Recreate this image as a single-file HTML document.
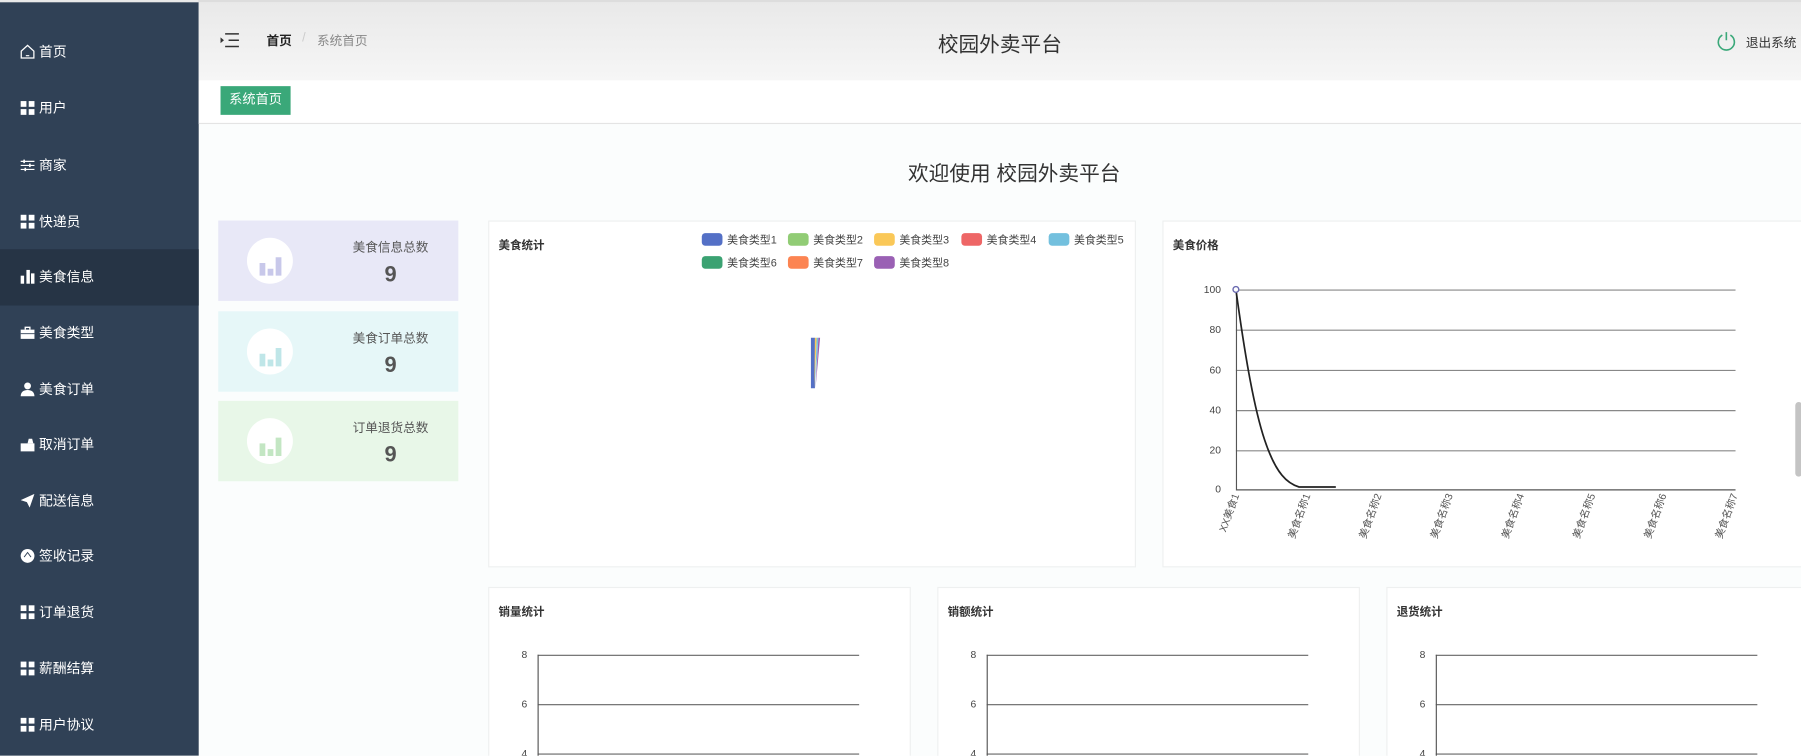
<!DOCTYPE html>
<html><head><meta charset="utf-8"><style>
*{margin:0;padding:0;box-sizing:border-box}
html,body{width:1801px;height:756px;overflow:hidden;background:#fbfdfd}
#w{position:absolute;left:0;top:0;width:1568px;height:658px;transform:scale(1.1486);transform-origin:0 0;font-family:"Liberation Sans","Noto Sans CJK SC",sans-serif;background:#fbfdfd;overflow:hidden}
.a{position:absolute}
#side{left:0;top:0;width:173px;height:658px;background:#304156;border-top:2px solid #e9e9e9}
.it{position:absolute;left:0;width:173px;height:49px;color:#fff;font-size:12px;line-height:49px;padding-left:34px}
.it i{position:absolute;left:18px;top:18px;width:12px;height:12px}
.it svg{position:absolute;left:17px;top:17px}
.g i{background:linear-gradient(#fff,#fff) 0 0/5px 5px no-repeat,linear-gradient(#fff,#fff) 7px 0/5px 5px no-repeat,linear-gradient(#fff,#fff) 0 7px/5px 5px no-repeat,linear-gradient(#fff,#fff) 7px 7px/5px 5px no-repeat}
#hd{left:173px;top:0;width:1395px;height:70px;background:linear-gradient(#e9e9e9,#f6f6f6);border-top:2px solid #ddd}
.card{position:absolute;left:190px;width:209px;height:70px}
.card .c{position:absolute;left:25px;top:15px;width:40px;height:40px;border-radius:50%;background:#fff}
.card .t{position:absolute;left:100px;width:100px;text-align:center;top:15px;font-size:11px;color:#555}
.card .n{position:absolute;left:100px;width:100px;text-align:center;top:37px;font-size:19px;font-weight:bold;color:#555}
.p{position:absolute;background:#fff;border:1px solid #eef0f0}
.pt{position:absolute;left:8px;top:12px;font-size:10px;font-weight:bold;color:#333}
.lg{position:absolute;font-size:9.5px;color:#444;white-space:nowrap}
.lg b{display:inline-block;width:18px;height:11px;border-radius:3px;vertical-align:-2px;margin-right:4px}
svg text{font-family:"Liberation Sans","Noto Sans CJK SC",sans-serif}
</style></head><body><div id="w">
<div id="side" class="a">
<div class="it" style="top:19px"><svg width="14" height="14"><path d="M1.5 6.5L7 1.5l5.5 5v6h-11z" fill="none" stroke="#fff" stroke-width="1.1"/><path d="M5.5 10.5h3" stroke="#fff" stroke-width="1"/></svg>首页</div>
<div class="it g" style="top:68px"><i></i>用户</div>
<div class="it" style="top:118px"><svg width="14" height="14"><path d="M1 3.5h12M1 7h12M1 10.5h12" stroke="#fff" stroke-width="1"/><path d="M4 2v3M9 5.5v3M5 9v3" stroke="#fff" stroke-width="1.4"/></svg>商家</div>
<div class="it g" style="top:167px"><i></i>快递员</div>
<div class="it" style="top:215px;background:#263445"><i style="background:linear-gradient(#fff,#fff) 0 5px/3px 7px no-repeat,linear-gradient(#fff,#fff) 4.5px 0/3px 12px no-repeat,linear-gradient(#fff,#fff) 9px 3px/3px 9px no-repeat"></i>美食信息</div>
<div class="it" style="top:264px"><svg width="14" height="14"><path d="M1 4h12v8H1z" fill="#fff"/><path d="M5 4V2h4v2" fill="none" stroke="#fff" stroke-width="1.2"/><path d="M1 7.5h12" stroke="#304156" stroke-width=".8"/></svg>美食类型</div>
<div class="it" style="top:313px"><svg width="14" height="14"><circle cx="7" cy="4" r="3" fill="#fff"/><path d="M1 13c0-4 3-5.5 6-5.5s6 1.5 6 5.5z" fill="#fff"/></svg>美食订单</div>
<div class="it" style="top:361px"><svg width="14" height="14"><path d="M1 6h12v7H1z" fill="#fff"/><path d="M8 2h3l1 4H7z" fill="#fff"/></svg>取消订单</div>
<div class="it" style="top:410px"><i style="background:#fff;clip-path:polygon(0 45%,100% 0,65% 100%,45% 60%)"></i>配送信息</div>
<div class="it" style="top:458px"><svg width="14" height="14"><circle cx="7" cy="7" r="6" fill="#fff"/><path d="M4 8l3-4 3 4" fill="none" stroke="#304156" stroke-width=".8"/></svg>签收记录</div>
<div class="it g" style="top:507px"><i></i>订单退货</div>
<div class="it g" style="top:556px"><i></i>薪酬结算</div>
<div class="it g" style="top:605px"><i></i>用户协议</div>
</div>
<div id="hd" class="a">
<svg class="a" style="left:18px;top:26px" width="18" height="14"><path d="M5 1.5h12M8 7h9M5 12.5h12" stroke="#333" stroke-width="1.3"/><path d="M1 4.5l3 2.5-3 2.5z" fill="#333"/></svg>
<div class="a" style="left:59px;top:25px;font-size:11px;font-weight:bold;color:#222">首页</div>
<div class="a" style="left:90px;top:25px;font-size:11px;color:#ccc">/</div>
<div class="a" style="left:103px;top:25px;font-size:11px;color:#888">系统首页</div>
<div class="a" style="left:600px;width:195px;text-align:center;top:23px;font-size:18px;color:#333">校园外卖平台</div>
<svg class="a" style="left:1321px;top:25px" width="18" height="18"><path d="M5.5 3.5A7 7 0 1 0 12.5 3.5" fill="none" stroke="#3aa879" stroke-width="1.4"/><path d="M9 1v7" stroke="#3aa879" stroke-width="1.4"/></svg>
<div class="a" style="left:1347px;top:27px;font-size:11px;color:#333">退出系统</div>
</div>
<div class="a" style="left:173px;top:70px;width:1395px;height:38px;background:#fff;border-bottom:1px solid #e4e4e4"></div>
<div class="a" style="left:192px;top:75px;width:61px;height:25px;background:#3aa879;color:#fff;font-size:11.5px;line-height:25px;text-align:center">系统首页</div>
<div class="a" style="left:700px;width:366px;text-align:center;top:137px;font-size:18px;color:#333">欢迎使用 校园外卖平台</div>

<div class="card" style="top:192px;background:#e8e8f7"><div class="c"><svg width="40" height="40"><path d="M11 22h5v11h-5zM18 27h5v6h-5zM25 17h5v16h-5z" fill="#c8c8ea"/></svg></div><div class="t">美食信息总数</div><div class="n">9</div></div>
<div class="card" style="top:271px;background:#e6f7f8"><div class="c"><svg width="40" height="40"><path d="M11 22h5v11h-5zM18 27h5v6h-5zM25 17h5v16h-5z" fill="#bfe6e8"/></svg></div><div class="t">美食订单总数</div><div class="n">9</div></div>
<div class="card" style="top:349px;background:#e8f7e8"><div class="c"><svg width="40" height="40"><path d="M11 22h5v11h-5zM18 27h5v6h-5zM25 17h5v16h-5z" fill="#c3e6c3"/></svg></div><div class="t">订单退货总数</div><div class="n">9</div></div>

<div class="p" style="left:425px;top:192px;width:564px;height:302px">
<div class="pt">美食统计</div>
<div class="lg" style="left:185px;top:8px"><b style="background:#5470c6"></b>美食类型1</div>
<div class="lg" style="left:260px;top:8px"><b style="background:#91cc75"></b>美食类型2</div>
<div class="lg" style="left:335px;top:8px"><b style="background:#fac858"></b>美食类型3</div>
<div class="lg" style="left:411px;top:8px"><b style="background:#ee6666"></b>美食类型4</div>
<div class="lg" style="left:487px;top:8px"><b style="background:#73c0de"></b>美食类型5</div>
<div class="lg" style="left:185px;top:28px"><b style="background:#3ba272"></b>美食类型6</div>
<div class="lg" style="left:260px;top:28px"><b style="background:#fc8452"></b>美食类型7</div>
<div class="lg" style="left:335px;top:28px"><b style="background:#9a60b4"></b>美食类型8</div>
<svg class="a" style="left:276px;top:100px" width="14" height="46"><path d="M4 1h2v44H4zM6 1h1.5v44H6z" fill="#5470c6"/><path d="M7.5 1h1.5L7 45z" fill="#fac858"/><path d="M9 1h1.5L7.5 45z" fill="#73c0de"/><path d="M10.5 1h1.5L8 45z" fill="#9a60b4"/></svg>
</div>

<div class="p" style="left:1012px;top:192px;width:560px;height:302px">
<div class="pt">美食价格</div>
<svg class="a" style="left:0;top:0" width="560" height="302">
<g stroke="#888" stroke-width="1"><path d="M63 59.5h435M63 94.5h435M63 129.5h435M63 164.5h435M63 199.5h435"/></g>
<path d="M63.5 59v174M63 233.5h435" stroke="#555" stroke-width="1"/>
<g font-size="9" fill="#444" text-anchor="end"><text x="50" y="62">100</text><text x="50" y="97">80</text><text x="50" y="132">60</text><text x="50" y="167">40</text><text x="50" y="202">20</text><text x="50" y="236">0</text></g>
<path d="M63 59C70 110 78 160 88 190S108 228 118 231L150 231" fill="none" stroke="#222" stroke-width="1.5"/>
<circle cx="63" cy="59" r="2.5" fill="#fff" stroke="#6a6ab0" stroke-width="1.2"/>
<g font-size="9" fill="#555" text-anchor="end">
<text transform="translate(66,238) rotate(-70)">XX美食1</text>
<text transform="translate(128,238) rotate(-70)">美食名称1</text>
<text transform="translate(190,238) rotate(-70)">美食名称2</text>
<text transform="translate(252,238) rotate(-70)">美食名称3</text>
<text transform="translate(314,238) rotate(-70)">美食名称4</text>
<text transform="translate(376,238) rotate(-70)">美食名称5</text>
<text transform="translate(438,238) rotate(-70)">美食名称6</text>
<text transform="translate(500,238) rotate(-70)">美食名称7</text>
</g></svg>
</div>

<div class="p" style="left:425px;top:511px;width:368px;height:160px"><div class="pt">销量统计</div>
<svg class="a" width="368" height="160"><path d="M42 58.5h280M42 101.5h280M42 144.5h280" stroke="#666"/><path d="M42.5 58v100" stroke="#555"/><g font-size="9" fill="#444" text-anchor="end"><text x="33" y="61">8</text><text x="33" y="104">6</text><text x="33" y="147">4</text></g></svg></div>
<div class="p" style="left:816px;top:511px;width:368px;height:160px"><div class="pt">销额统计</div>
<svg class="a" width="368" height="160"><path d="M42 58.5h280M42 101.5h280M42 144.5h280" stroke="#666"/><path d="M42.5 58v100" stroke="#555"/><g font-size="9" fill="#444" text-anchor="end"><text x="33" y="61">8</text><text x="33" y="104">6</text><text x="33" y="147">4</text></g></svg></div>
<div class="p" style="left:1207px;top:511px;width:368px;height:160px"><div class="pt">退货统计</div>
<svg class="a" width="368" height="160"><path d="M42 58.5h280M42 101.5h280M42 144.5h280" stroke="#666"/><path d="M42.5 58v100" stroke="#555"/><g font-size="9" fill="#444" text-anchor="end"><text x="33" y="61">8</text><text x="33" y="104">6</text><text x="33" y="147">4</text></g></svg></div>
<div class="a" style="left:1563px;top:350px;width:6px;height:65px;background:#c4c4c4;border-radius:3px"></div>
</div></body></html>
